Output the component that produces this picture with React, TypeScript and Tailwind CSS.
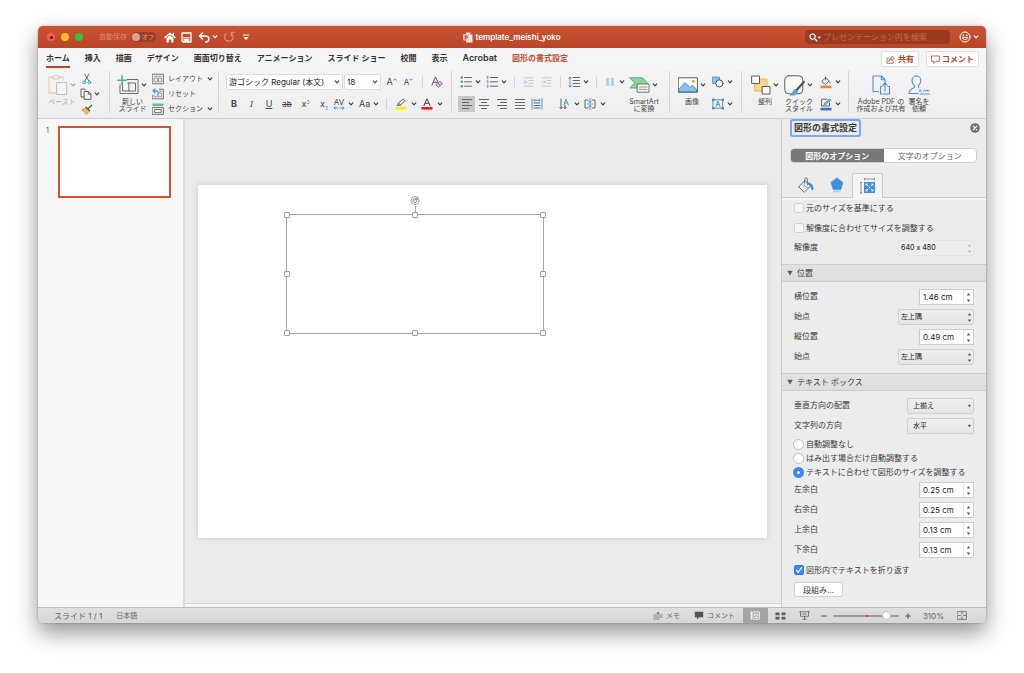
import React from 'react';

type Kids = { children?: React.ReactNode };

function Svg({ w, h, children, className = '' }: { w: number; h: number; className?: string } & Kids) {
  return (
    <svg width={w} height={h} viewBox={`0 0 ${w} ${h}`} fill="none" strokeLinecap="round" strokeLinejoin="round" className={'shrink-0 ' + className} aria-hidden="true">
      {children}
    </svg>
  );
}

function Caret({ className = '' }: { className?: string }) {
  return (
    <span className={'flex w-2 shrink-0 items-center justify-center ' + className}>
      <Svg w={6} h={4}>
        <path d="M1.2 0.9 L3 2.8 L4.8 0.9" stroke="currentColor" strokeWidth="1.2" />
      </Svg>
    </span>
  );
}

function Group({ children, className = '' }: { className?: string } & Kids) {
  return <div className={'flex shrink-0 border-r border-[#d6d6d6] ' + className}>{children}</div>;
}

function Tool({ label, children, className = '' }: { label: string; className?: string } & Kids) {
  return (
    <button type="button" aria-label={label} className={'flex h-4 shrink-0 items-center justify-center ' + className}>
      {children}
    </button>
  );
}

function Sep({ className = '' }: { className?: string }) {
  return <span className={'h-3 w-px shrink-0 bg-[#d6d6d6] ' + className} />;
}

function BigTool({ icon, caret = true, lines, className = '' }: { icon: React.ReactNode; caret?: boolean; lines: string[]; className?: string }) {
  return (
    <button type="button" className={'flex shrink-0 flex-col items-center pt-px ' + className}>
      <span className="flex h-[26px] items-center gap-px">
        {icon}
        {caret && <Caret />}
      </span>
      <span className="flex flex-col items-center text-[7px] leading-[7px] whitespace-nowrap">
        {lines.map((l) => (
          <span key={l}>{l}</span>
        ))}
      </span>
    </button>
  );
}

const BLUE = '#3a93d0';
const GREY = '#666666';

function Lines({ xs, color = GREY }: { xs: [number, number][]; color?: string }) {
  return (
    <Svg w={12} h={12}>
      {xs.map(([a, b], i) => (
        <path key={i} d={`M${a} ${1.5 + i * 3}H${b}`} stroke={color} strokeWidth="1" strokeLinecap="butt" />
      ))}
    </Svg>
  );
}

function TitleBar() {
  return (
    <header className="grid h-[22px] shrink-0 grid-cols-[1fr_auto_1fr] items-center bg-linear-to-b from-[#c85434] to-[#bb4526] text-white">
      <div className="flex items-center pl-[9px]">
        <div className="flex gap-[6px]">
          <button type="button" aria-label="閉じる" className="flex size-2 items-center justify-center rounded-full bg-[#fb5b55]">
            <span className="size-[3px] rounded-full bg-[#5d0b06]" />
          </button>
          <button type="button" aria-label="しまう" className="size-2 rounded-full bg-[#fcbc2e]" />
          <button type="button" aria-label="拡大" className="size-2 rounded-full bg-[#28c840]" />
        </div>
        <label htmlFor="autosave" className="ml-4 text-[7px] text-[#d98b76]">自動保存</label>
        <button id="autosave" type="button" role="switch" aria-checked="false" className="ml-1 flex h-[10px] w-[25px] items-center gap-[2px] rounded-full bg-[#9d3e26] px-px text-[6px] leading-none text-[#e3a898]">
          <span className="size-2 shrink-0 rounded-full bg-[#dfa294]" />
          オフ
        </button>
        <button type="button" aria-label="ホーム" className="ml-2">
          <Svg w={12} h={11}>
            <path d="M1 5.6 L6 1.2 L11 5.6 M9.3 1.4V3.4" stroke="#fff" strokeWidth="1.4" />
            <path d="M2.5 6.3 L6 3.2 L9.5 6.3 V10.5 H7.2 V7.5 H4.8 V10.5 H2.5Z" fill="#fff" />
          </Svg>
        </button>
        <button type="button" aria-label="保存" className="ml-[5px]">
          <Svg w={11} h={11}>
            <path d="M1 1H10V10H2.2L1 8.8Z" stroke="#fff" strokeWidth="1.3" />
            <path d="M2.2 5.6H8.8 M3.3 7H7.8V10H6.2V8.3H4.9V10H3.3Z" fill="#fff" stroke="#fff" strokeWidth=".8" />
          </Svg>
        </button>
        <button type="button" aria-label="元に戻す" className="ml-[6px] flex items-center gap-px">
          <Svg w={12} h={11}>
            <path d="M4.5 1 L1.5 4 L4.5 7 M1.5 4H7.5C12 4 12 10 7.5 10" stroke="#fff" strokeWidth="1.5" />
          </Svg>
          <Caret />
        </button>
        <button type="button" aria-label="やり直し" className="ml-1">
          <Svg w={12} h={12}>
            <path d="M3.2 2.6A4.3 4.3 0 1 0 8.4 2.5 M8.2 5V1.5H11" stroke="#dc8a74" strokeWidth="1.3" />
          </Svg>
        </button>
        <button type="button" aria-label="カスタマイズ" className="ml-2">
          <Svg w={6} h={7}>
            <path d="M0.5 1H5.5" stroke="#fff" strokeWidth="1" />
            <path d="M0.3 3H5.7L3 6Z" fill="#fff" />
          </Svg>
        </button>
      </div>
      <h1 className="flex items-center gap-[2px] text-[8px] font-semibold">
        <Svg w={10} h={11}>
          <path d="M3 .5H7L9.5 3V10.5H3Z" fill="#f6e4df" />
          <path d="M7 .5L9.5 3H7Z" fill="#d8937f" />
          <rect x="0" y="2" width="6" height="6.5" rx="1" fill="#eec9be" />
          <path d="M2.2 7.3V3.8H3.4A1 1 0 0 1 3.4 6H2.4" stroke="#b5452a" strokeWidth=".9" />
        </Svg>
        template_meishi_yoko
      </h1>
      <div className="flex items-center justify-end pr-[6px]">
        <label className="flex h-[14px] w-[145px] items-center gap-[2px] rounded-sm bg-[#9b3a20] px-1">
          <Svg w={12} h={9}>
            <circle cx="3.6" cy="3.6" r="2.6" stroke="#fff" strokeWidth="1.1" />
            <path d="M5.6 5.6L8 8" stroke="#fff" strokeWidth="1.3" />
            <path d="M8.5 3.7H12L10.2 5.7Z" fill="#fff" />
          </Svg>
          <input aria-label="検索" placeholder="プレゼンテーション内を検索" className="w-full min-w-0 bg-transparent text-[8px] outline-none placeholder:text-[#c06a53]" />
        </label>
        <button type="button" aria-label="フィードバック" className="ml-[9px] flex items-center gap-px">
          <Svg w={12} h={12}>
            <circle cx="6" cy="6" r="5" stroke="#fff" strokeWidth="1" />
            <path d="M3.4 6.8C4 9.4 8 9.4 8.6 6.8Z" stroke="#fff" strokeWidth=".9" />
            <circle cx="4.3" cy="4.4" r=".8" fill="#fff" />
            <circle cx="7.7" cy="4.4" r=".8" fill="#fff" />
          </Svg>
          <Caret />
        </button>
      </div>
    </header>
  );
}

const TABS = ['ホーム', '挿入', '描画', 'デザイン', '画面切り替え', 'アニメーション', 'スライド ショー', '校閲', '表示', 'Acrobat', '図形の書式設定'];

function TabRow() {
  return (
    <div className="flex h-[22px] shrink-0 items-center justify-between bg-[#f6f5f5] pr-[7px] pl-2">
      <nav className="flex gap-[15px] text-[8px] font-semibold text-[#333]">
        {TABS.map((t, i) => (
          <button
            key={t}
            type="button"
            className={
              'h-[18px] border-b-2 whitespace-nowrap ' +
              (i === 0 ? 'border-[#b7472a]' : 'border-transparent') +
              (t === 'Acrobat' ? ' text-[9px]' : '') +
              (i === TABS.length - 1 ? ' text-[#bb5136]' : '')
            }
          >
            {t}
          </button>
        ))}
      </nav>
      <div className="flex gap-[7px] text-[8px] font-semibold text-[#b7472a]">
        <button type="button" className="flex h-4 items-center gap-[3px] rounded-xs border border-[#e0dede] bg-white px-1">
          <Svg w={9} h={9}>
            <path d="M3 3H1V8.3H7.3V6.5 M3 6C3.3 3.8 4.6 2.9 6 2.9V1.2L8.4 3.5L6 5.6V4.2C4.7 4.2 3.7 4.8 3 6Z" stroke="#c04f33" strokeWidth=".8" />
          </Svg>
          共有
        </button>
        <button type="button" className="flex h-4 items-center gap-[2px] rounded-xs border border-[#e0dede] bg-white px-1">
          <Svg w={9} h={9}>
            <path d="M.7 1H8.3V6.3H4.8L2.8 8.4V6.3H.7Z" stroke="#c04f33" strokeWidth=".9" />
          </Svg>
          コメント
        </button>
      </div>
    </div>
  );
}

function SlideGlyph({ kind }: { kind: 'layout' | 'reset' | 'section' }) {
  return (
    <Svg w={12} h={12}>
      {kind === 'section' ? (
        <>
          <rect x=".5" y=".5" width="11" height="2.6" fill="#5fc08a" />
          <path d="M.6 4.6H11.4V11.4H.6Z M2.8 6.5H9.2V9.6H2.8Z" stroke="#666" strokeWidth=".9" />
        </>
      ) : (
        <>
          <path d="M.6 1.2H11.4V10.8H.6Z" stroke="#666" strokeWidth=".9" />
          <path d="M2.4 3.2H9.6 M2.4 5H5.4V8.8H2.4Z M6.8 5H9.6V8.8H6.8Z" stroke="#777" strokeWidth=".7" />
        </>
      )}
      {kind === 'reset' && (
        <>
          <rect x="0" y="0" width="7" height="6.6" fill="#f2f1f1" />
          <path d="M3 .9L1 2.9L3 4.9 M1 2.9H4.5C6.5 3 6.5 5 6 6" stroke={BLUE} strokeWidth="1.2" />
        </>
      )}
    </Svg>
  );
}

function Ribbon() {
  return (
    <div className="flex h-[49px] shrink-0 border-b border-[#cfcfcf] bg-linear-to-b from-[#f5f4f4] to-[#efeeee] pt-px pb-[5px] pl-2 text-[#444]">
      <Group className="w-[64px]">
        <BigTool
          className="w-[32px] text-[#a9a9a9]"
          lines={['ペースト']}
          icon={
            <Svg w={20} h={22}>
              <path d="M5 3H1V19H8 M11 3H15V6" stroke="#f0d3a6" strokeWidth="1.3" />
              <path d="M4.5 4.5V2.5H6.3C6.5 .5 9.5 .5 9.7 2.5H11.5V4.5Z" stroke="#c4c4c4" strokeWidth=".9" fill="#f6f6f6" />
              <path d="M9 8.5H18.7V20.5H9Z" stroke="#bdbdbd" strokeWidth="1" fill="#f6f6f6" />
            </Svg>
          }
        />
        <div className="ml-[2px] flex flex-col items-start gap-px pt-px">
          <Tool label="切り取り" className="h-[14px] w-[13px]">
            <Svg w={10} h={12}>
              <path d="M2.5 1L7 8 M7 1L2.8 8" stroke="#555" strokeWidth=".9" />
              <circle cx="2.2" cy="9.4" r="1.4" stroke={BLUE} />
              <circle cx="7.4" cy="9.4" r="1.4" stroke={BLUE} />
            </Svg>
          </Tool>
          <Tool label="コピー" className="h-[14px] gap-px">
            <Svg w={12} h={12}>
              <path d="M4 9H1V1H4.5L6 2.5" stroke="#555" strokeWidth=".9" />
              <path d="M4.5 3.5H8.5L11 6V11.3H4.5Z M8.3 3.7V6.2H11" stroke="#555" strokeWidth=".9" />
            </Svg>
            <Caret />
          </Tool>
          <Tool label="書式のコピー" className="h-[14px] w-[13px]">
            <Svg w={12} h={11}>
              <path d="M1 5.5L5 4L8 7L6 10.3Z" fill="#f4b36a" stroke="#e69339" strokeWidth=".8" />
              <path d="M5 3.2L8.6 6.8 M6.8 4.9L10.6 1.2" stroke="#555" strokeWidth="1.3" />
            </Svg>
          </Tool>
        </div>
      </Group>

      <Group className="w-[109px] pl-[7px]">
        <BigTool
          className="w-[31px]"
          lines={['新しい', 'スライド']}
          icon={
            <Svg w={22} h={20}>
              <path d="M10 4.5H21V18.5H3V10 M5.5 8V16H18.5V8H11 M11.8 8V16" stroke="#6e6e6e" strokeWidth="1" />
              <path d="M5 .8V9.6 M.8 5.2H9.5" stroke="#4db87b" strokeWidth="1.5" />
            </Svg>
          }
        />
        <div className="ml-1 flex flex-col items-start gap-px pt-px text-[7px]">
          <Tool label="レイアウト" className="h-[14px] gap-1">
            <SlideGlyph kind="layout" />
            レイアウト
            <Caret className="-ml-px" />
          </Tool>
          <Tool label="リセット" className="h-[14px] gap-1">
            <SlideGlyph kind="reset" />
            リセット
          </Tool>
          <Tool label="セクション" className="h-[14px] gap-1">
            <SlideGlyph kind="section" />
            セクション
            <Caret className="-ml-px" />
          </Tool>
        </div>
      </Group>

      <Group className="w-[233px] flex-col gap-[6px] pt-[3px] pl-[7px]">
        <div className="flex items-center">
          <label className="relative flex items-center">
            <select aria-label="フォント" className="h-4 w-[117px] appearance-none rounded-xs border border-[#dcdcdc] bg-white pl-[2px] text-[8px] text-[#222]">
              <option>游ゴシック Regular (本文)</option>
            </select>
            <Caret className="pointer-events-none absolute right-[2px]" />
          </label>
          <label className="relative ml-px flex items-center">
            <select aria-label="フォント サイズ" className="h-4 w-[37px] appearance-none rounded-xs border border-[#dcdcdc] bg-white pl-[2px] text-[8px] text-[#222]">
              <option>18</option>
            </select>
            <Caret className="pointer-events-none absolute right-[2px]" />
          </label>
          <Tool label="拡大" className="ml-[2px] w-[17px] text-[9px]">
            A
            <Svg w={4} h={8}><path d="M.6 2.3L2 .9L3.4 2.3" stroke={BLUE} strokeWidth="1" /></Svg>
          </Tool>
          <Tool label="縮小" className="w-[17px] text-[8px]">
            A
            <Svg w={4} h={8}><path d="M.6 .9L2 2.3L3.4 .9" stroke={BLUE} strokeWidth="1" /></Svg>
          </Tool>
          <Sep className="ml-[5px]" />
          <Tool label="書式のクリア" className="ml-2">
            <Svg w={12} h={12}>
              <path d="M1 9L4.5 1L7 6.3 M2.3 6.3H6" stroke="#555" strokeWidth="1" />
              <path d="M5 8.6L8.8 5.4L11.3 7.6L7.6 10.9Z M6.7 7.2L9.3 9.4" stroke="#a64fb5" strokeWidth="1" fill="#e7c9ec" />
            </Svg>
          </Tool>
        </div>
        <div className="-ml-px flex items-center text-[9px]">
          <Tool label="太字" className="w-[18px] font-bold">B</Tool>
          <Tool label="斜体" className="w-[17px] font-serif italic">I</Tool>
          <Tool label="下線" className="w-[18px] underline">U</Tool>
          <Tool label="取り消し線" className="w-[18px] text-[8px] line-through">ab</Tool>
          <Tool label="上付き" className="w-[19px]">x<span className="mb-[5px] text-[5px] text-[#3a93d0]">2</span></Tool>
          <Tool label="下付き" className="w-[18px]">x<span className="mt-[7px] text-[5px] text-[#3a93d0]">2</span></Tool>
          <Tool label="文字の間隔" className="gap-[2px] text-[8px] leading-none">
            <span className="flex flex-col items-center">
              AV
              <Svg w={12} h={4}>
                <path d="M2.3 .7L1 2L2.3 3.3 M1 2H5 M9.7 .7L11 2L9.7 3.3 M11 2H7" stroke={BLUE} strokeWidth=".9" />
              </Svg>
            </span>
            <Caret />
          </Tool>
          <Tool label="文字種の変換" className="ml-1 gap-[2px]">Aa<Caret /></Tool>
          <Sep className="ml-[6px]" />
          <Tool label="蛍光ペン" className="ml-2 gap-[3px]">
            <Svg w={12} h={12}>
              <path d="M2.5 7.5L3.5 5L8.3 1L10 2.8L5.5 7L2.5 7.5Z M3.6 5.2L5.4 7" stroke="#555" strokeWidth=".9" />
              <rect x=".5" y="9" width="11" height="2.6" fill="#ffee00" />
            </Svg>
            <Caret />
          </Tool>
          <Tool label="フォントの色" className="ml-[3px] gap-[3px]">
            <Svg w={12} h={12}>
              <path d="M3 7.6L6 .8L9 7.6 M4 5.3H8" stroke="#444" strokeWidth="1" />
              <rect x=".5" y="9" width="11" height="2.6" fill="#f51414" />
            </Svg>
            <Caret />
          </Tool>
        </div>
      </Group>

      <Group className="w-[218px] pl-[6px]">
        <div className="flex w-[168px] flex-col gap-[6px] pt-[3px]">
          <div className="flex items-center">
            <Tool label="箇条書き" className="ml-[2px] gap-[2px]">
              <Svg w={12} h={12}>
                {[1.5, 5.8, 10.2].map((y) => (
                  <g key={y}>
                    <circle cx="1.8" cy={y} r="1.2" fill={BLUE} />
                    <path d={`M4.5 ${y}H11.5`} stroke="#666" strokeWidth="1" />
                  </g>
                ))}
              </Svg>
              <Caret />
            </Tool>
            <Tool label="段落番号" className="ml-1 gap-[2px]">
              <Svg w={12} h={12}>
                {[1.5, 5.8, 10.2].map((y) => (
                  <g key={y}>
                    <path d={`M1 ${y - 1}H2V${y + 1}H1.3`} stroke={BLUE} strokeWidth=".9" />
                    <path d={`M4.5 ${y}H11.5`} stroke="#666" strokeWidth="1" />
                  </g>
                ))}
              </Svg>
              <Caret />
            </Tool>
            <Sep className="ml-[6px]" />
            <Tool label="インデントを減らす" className="ml-2">
              <Svg w={11} h={10}>
                <path d="M1 .8H10 M6 3.6H10 M6 6.4H10 M1 9.2H10" stroke="#c3c3c3" strokeWidth=".9" />
                <path d="M2.5 3.5L1 5L2.5 6.5 M1 5H4.5" stroke="#a3cde8" strokeWidth=".9" />
              </Svg>
            </Tool>
            <Tool label="インデントを増やす" className="ml-[7px]">
              <Svg w={11} h={10}>
                <path d="M1 .8H10 M6 3.6H10 M6 6.4H10 M1 9.2H10" stroke="#c3c3c3" strokeWidth=".9" />
                <path d="M3 3.5L4.5 5L3 6.5 M4.5 5H1" stroke="#a3cde8" strokeWidth=".9" />
              </Svg>
            </Tool>
            <Sep className="ml-2" />
            <Tool label="行間" className="ml-[7px] gap-[2px]">
              <Svg w={12} h={12}>
                <path d="M5 1.5H11.5 M5 4.5H11.5 M5 7.5H11.5 M5 10.5H11.5" stroke="#555" strokeWidth=".9" />
                <path d="M2 1V11 M.7 2.4L2 1L3.3 2.4 M.7 9.6L2 11L3.3 9.6" stroke={BLUE} strokeWidth=".9" />
              </Svg>
              <Caret />
            </Tool>
            <Sep className="ml-[6px]" />
            <Tool label="段組み" className="ml-2 gap-[3px]">
              <Svg w={10} h={8}>
                <path d="M1 1H4.2 M5.8 1H9 M1 3H4.2 M5.8 3H9 M1 5H4.2 M5.8 5H9 M1 7H4.2 M5.8 7H9" stroke="#79b5dd" strokeWidth="1" strokeLinecap="butt" />
              </Svg>
              <Caret />
            </Tool>
          </div>
          <div className="flex items-center">
            <Tool label="左揃え" className="w-[17px] bg-[#c9c8c8]"><Lines xs={[[1, 11], [1, 8], [1, 11], [1, 8]]} /></Tool>
            <Tool label="中央揃え" className="w-[18px]"><Lines xs={[[1, 11], [3, 9], [1, 11], [3, 9]]} /></Tool>
            <Tool label="右揃え" className="w-[18px]"><Lines xs={[[1, 11], [4, 11], [1, 11], [4, 11]]} /></Tool>
            <Tool label="両端揃え" className="w-[17px]"><Lines xs={[[1, 11], [1, 11], [1, 11], [1, 11]]} /></Tool>
            <Tool label="均等割り付け" className="w-[18px]">
              <Svg w={12} h={12}>
                <path d="M1 .8V11.2 M11 .8V11.2 M3 2.3H9 M4 1.2L2.8 2.3L4 3.4 M8 1.2L9.2 2.3L8 3.4" stroke={BLUE} strokeWidth=".9" />
                <path d="M3 5H9 M3 7.5H9 M3 10H9" stroke={GREY} strokeWidth="1" />
              </Svg>
            </Tool>
            <Tool label="文字列の方向" className="ml-[13px] gap-[3px]">
              <Svg w={11} h={12}>
                <path d="M2 1V10.5 M.8 9.3L2 10.7L3.2 9.3 M6 7.5V10.5 M4.8 9.3L6 10.7L7.2 9.3" stroke="#555" strokeWidth=".9" />
                <path d="M4.8 7L7 1.2L9.4 7 M5.7 5H8.4" stroke={BLUE} strokeWidth=".9" />
              </Svg>
              <Caret />
            </Tool>
            <Tool label="文字の配置" className="ml-[3px] gap-[3px]">
              <Svg w={12} h={12}>
                <path d="M4 2H1V10H4 M8 2H11V10H8" stroke="#555" strokeWidth=".9" />
                <path d="M6 .8V4.6 M6 7.4V11.2 M4.8 3.4L6 4.6L7.2 3.4 M4.8 8.6L6 7.4L7.2 8.6 M3.5 6H8.5" stroke={BLUE} strokeWidth=".9" />
              </Svg>
              <Caret />
            </Tool>
          </div>
        </div>
        <BigTool
          className="w-[36px]"
          lines={['SmartArt', 'に変換']}
          icon={
            <Svg w={21} h={16}>
              <path d="M1 .8H13.5L18.5 6V11H1L5.5 6Z" fill="#8dd3a0" stroke="#55b574" strokeWidth="1" />
              <path d="M8.5 7H20V15.2H8.5Z" fill="#f7f7f7" stroke="#666" strokeWidth=".9" />
              <path d="M10.5 10H18 M10.5 12.4H18" stroke="#888" strokeWidth=".9" />
            </Svg>
          }
        />
      </Group>

      <Group className="w-[72px] pl-2">
        <BigTool
          className="w-[28px]"
          lines={['画像']}
          icon={
            <Svg w={20} h={16}>
              <path d="M.6 .8H19.4V15.2H.6Z" fill="#fff" />
              <path d="M1 12L7 5.5L12 10.5L14.5 8L19 13V15H1Z" fill="#8cc1e8" stroke={BLUE} strokeWidth=".9" />
              <circle cx="15.3" cy="4.4" r="1.4" fill="#f0954a" />
              <path d="M.6 .8H19.4V15.2H.6Z" stroke="#5a5a5a" strokeWidth="1" />
            </Svg>
          }
        />
        <div className="ml-[6px] flex flex-col gap-[6px] pt-[3px]">
          <Tool label="図形" className="gap-[2px]">
            <Svg w={12} h={12}>
              <path d="M.8 1H7.5V7.5H.8Z" fill="#8cc1e8" stroke={BLUE} strokeWidth=".8" />
              <circle cx="7.4" cy="7.4" r="3.6" fill="#f5f5f5" stroke="#555" strokeWidth="1" />
            </Svg>
            <Caret />
          </Tool>
          <Tool label="テキスト ボックス" className="gap-[2px]">
            <Svg w={12} h={12}>
              <path d="M1.3 1.8H10.7V10.2H1.3Z" stroke="#666" strokeWidth=".8" />
              <path d="M4 8.4L6 3.2L8 8.4 M4.7 6.6H7.3" stroke={BLUE} strokeWidth=".9" />
              {[[0, 0.6], [9.6, 0.6], [0, 9], [9.6, 9]].map(([x, y]) => (
                <rect key={`${x}-${y}`} x={x} y={y} width="2.4" height="2.4" fill={BLUE} />
              ))}
            </Svg>
            <Caret />
          </Tool>
        </div>
      </Group>

      <Group className="w-[107px] pl-2">
        <BigTool
          className="w-[30px]"
          lines={['整列']}
          icon={
            <Svg w={20} h={20}>
              <path d="M4 4H16V16H4Z" fill="#f8d58c" stroke="#e9b95c" strokeWidth="1" />
              <path d="M1 1H8.5V8.5H1Z M11.5 11.5H19V19H11.5Z" fill="#f9f9f9" stroke="#5a5a5a" strokeWidth="1" />
            </Svg>
          }
        />
        <BigTool
          className="ml-1 w-[30px]"
          lines={['クイック', 'スタイル']}
          icon={
            <Svg w={21} h={21}>
              <rect x=".8" y=".8" width="18" height="18" rx="4" fill="#f9f9f9" stroke="#5a5a5a" strokeWidth="1" />
              <path d="M19.8 7L12.5 15.2" stroke="#555" strokeWidth="2.2" />
              <path d="M6.5 20C9 19.5 8.5 15.5 11.2 14.2L13.6 16.6C13 19.5 9.5 20.8 6.5 20Z" fill="#5aa7df" stroke={BLUE} strokeWidth=".7" />
            </Svg>
          }
        />
        <div className="ml-[6px] flex flex-col gap-[6px] pt-[3px]">
          <Tool label="図形の塗りつぶし" className="gap-[2px]">
            <Svg w={12} h={13}>
              <path d="M2 5.2L5.7 1.6L9.2 5L5.6 8.2Z M5.7 .8V4" stroke="#555" strokeWidth=".9" />
              <path d="M9.8 5C11 6.6 10.8 7.8 10 7.8S9 6.6 9.8 5Z" fill={BLUE} />
              <rect x=".5" y="9.6" width="11" height="2.6" fill="#ee7d31" />
            </Svg>
            <Caret />
          </Tool>
          <Tool label="図形の枠線" className="gap-[2px]">
            <Svg w={12} h={13}>
              <path d="M7 1.2H1.5V8H9.5V5" stroke="#555" strokeWidth=".9" />
              <path d="M4 6.8L5 4.6L9.6 .8L11 2.3L6.2 6.3Z" fill="#8cc1e8" stroke={BLUE} strokeWidth=".8" />
              <rect x=".5" y="9.8" width="11" height="2.6" fill="#3f6cc5" />
            </Svg>
            <Caret />
          </Tool>
        </div>
      </Group>

      <div className="flex shrink-0 pl-2">
        <BigTool
          caret={false}
          className="w-[48px]"
          lines={['Adobe PDF の', '作成および共有']}
          icon={
            <Svg w={19} h={20}>
              <path d="M6.5 16.5H1V1H9.5L13 4.5V8 M9.3 1.2V4.7H13" stroke="#4a90ea" strokeWidth="1.1" />
              <path d="M10 11.5H8.5V19H17.5V11.5H16 M13 16V8.3 M10.8 10.3L13 8L15.2 10.3" stroke="#4a90ea" strokeWidth="1.1" />
            </Svg>
          }
        />
        <BigTool
          caret={false}
          className="ml-[2px] w-[24px]"
          lines={['署名を', '依頼']}
          icon={
            <Svg w={22} h={20}>
              <path d="M10 18.5H1C1 15 3 14 6 12.8C7 12.3 6.6 11.3 6 10.4C4.6 8.6 4 7.2 4 5.4A4.4 4.4 0 0 1 12.8 5.4C12.8 7.2 12.2 8.6 10.8 10.4C10.2 11.3 10 12 10.8 12.6" stroke="#4a90ea" strokeWidth="1.1" />
              <path d="M11 14.5L13.5 16.8 M13.5 14.5L11 16.8 M15 16.5L16.8 14.8L17.5 16.4L19.2 14.8L19.8 16.2L21.3 15.2 M12 19H21.3" stroke="#4a90ea" strokeWidth=".9" />
            </Svg>
          }
        />
      </div>
    </div>
  );
}

const HANDLES = [
  'left-0 top-0', 'left-1/2 top-0', 'left-full top-0',
  'left-0 top-1/2', 'left-full top-1/2',
  'left-0 top-full', 'left-1/2 top-full', 'left-full top-full',
];

function Canvas() {
  return (
    <main className="flex min-w-0 flex-1 flex-col bg-[#ebebeb]">
      <div className="flex flex-1 items-start border-b border-[#d2d2d2] pt-[66px] pr-[14px] pl-[13px]">
        <div className="relative aspect-[569/353] w-full bg-white shadow-[0_0_6px_rgba(0,0,0,0.14)]">
          <div className="absolute top-[8.2%] left-[15.5%] h-[34%] w-[45.3%] border border-[#a8a8a8]">
            <span className="absolute -top-[9px] left-1/2 h-[9px] w-px bg-[#b0b0b0]" />
            <span className="absolute -top-[19px] left-1/2 flex size-[9px] -translate-x-1/2 items-center justify-center rounded-full border border-[#a0a0a0] bg-white">
              <Svg w={7} h={7}>
                <path d="M5.3 4.3A2 2 0 1 1 4.6 1.9 M5.6 .8V2.8H3.6" stroke="#666" strokeWidth=".9" />
              </Svg>
            </span>
            {HANDLES.map((pos) => (
              <span key={pos} className={'absolute size-[6px] -translate-1/2 rounded-[1px] border border-[#a0a0a0] bg-white ' + pos} />
            ))}
          </div>
        </div>
      </div>
      <div className="h-[3px] shrink-0 bg-[#f7f7f7]" />
    </main>
  );
}

function Steps({ faint = false }: { faint?: boolean }) {
  return (
    <Svg w={5} h={11} className={faint ? 'text-[#b5b5b5]' : 'text-[#555]'}>
      <path d="M.8 3.4L2.5 1L4.2 3.4Z M.8 7.6L2.5 10L4.2 7.6Z" fill="currentColor" />
    </Svg>
  );
}

function Row({ id, label, children }: { id: string; label: string } & Kids) {
  return (
    <div className="flex h-4 items-center justify-between">
      <label htmlFor={id} className="pb-[2px]">{label}</label>
      {children}
    </div>
  );
}

function NumberRow({ id, label, value }: { id: string; label: string; value: string }) {
  return (
    <Row id={id} label={label}>
      <span className="flex h-4 w-[55px] items-center border border-[#cdcdcd] bg-white">
        <input id={id} defaultValue={value} className="w-full min-w-0 flex-1 bg-transparent pl-[3px] text-[8px] text-[#222] outline-none" />
        <button type="button" aria-label={label + 'を変更'} className="flex h-full w-[10px] items-center justify-center border-l border-[#e6e6e6]">
          <Steps />
        </button>
      </span>
    </Row>
  );
}

function SelectRow({ id, label, value, small = false }: { id: string; label: string; value: string; small?: boolean }) {
  return (
    <Row id={id} label={label}>
      <span className={'relative flex items-center ' + (small ? 'w-[67px]' : 'w-[76px]')}>
        <select id={id} className={'h-4 w-full appearance-none rounded-xs border border-[#d0d0d0] bg-linear-to-b from-[#efefef] to-[#e6e6e6] text-[7px] text-[#222] ' + (small ? 'pl-[5px]' : 'pl-[2px]')}>
          <option>{value}</option>
        </select>
        <span className="pointer-events-none absolute right-[2px] flex">
          {small ? (
            <Svg w={5} h={4}><path d="M.8 .8H4.2L2.5 3.2Z" fill="#555" /></Svg>
          ) : (
            <Steps />
          )}
        </span>
      </span>
    </Row>
  );
}

function Check({ id, label, checked = false }: { id: string; label: string; checked?: boolean }) {
  return (
    <div className="flex h-4 items-center gap-[2px]">
      <span className="relative flex size-[10px] items-center justify-center">
        <input id={id} type="checkbox" defaultChecked={checked} className="peer size-[10px] appearance-none rounded-xs border border-[#d2d2d2] bg-[#f6f6f6] checked:border-[#2f7cf0] checked:bg-[#3b86f7]" />
        <Svg w={8} h={8} className="pointer-events-none absolute hidden peer-checked:block">
          <path d="M1.5 4.2L3.3 6.2L6.5 1.6" stroke="#fff" strokeWidth="1.3" />
        </Svg>
      </span>
      <label htmlFor={id}>{label}</label>
    </div>
  );
}

function Radio({ id, label, checked = false }: { id: string; label: string; checked?: boolean }) {
  return (
    <div className="-ml-px flex h-[14px] items-center gap-[2px]">
      <input id={id} name="autofit" type="radio" defaultChecked={checked} className="size-[11px] appearance-none rounded-full border border-[#bfbfbf] bg-white checked:border-4 checked:border-[#3b86f7]" />
      <label htmlFor={id}>{label}</label>
    </div>
  );
}

function SectionHead({ children }: Kids) {
  return (
    <h3 className="h-[18px] shrink-0 border-y border-[#cccccc] bg-linear-to-b from-[#e2e2e2] to-[#dedede]">
      <button type="button" aria-expanded="true" className="flex h-full w-full items-center gap-1 pl-[5px] text-[8px]">
        <Svg w={6} h={6}><path d="M.3 .8H5.7L3 5.6Z" fill="#5a5a5a" /></Svg>
        {children}
      </button>
    </h3>
  );
}

function FormatPanel() {
  return (
    <aside className="flex w-[205px] shrink-0 flex-col border-l border-[#cbcbcb] bg-[#ececec] text-[8px] text-[#3a3a3a]">
      <div className="flex shrink-0 items-center justify-between pt-[2px] pr-[6px] pl-[10px]">
        <h2 className="flex h-[14px] items-center rounded-[1px] px-[2px] text-[9px] font-semibold ring-2 ring-[#7ba9ee]">図形の書式設定</h2>
        <button type="button" aria-label="閉じる">
          <Svg w={10} h={10}>
            <circle cx="5" cy="5" r="4.8" fill="#6e6e6e" />
            <path d="M3.2 3.2L6.8 6.8 M6.8 3.2L3.2 6.8" stroke="#fff" strokeWidth="1.1" />
          </Svg>
        </button>
      </div>
      <div className="mt-[13px] mr-[9px] ml-2 grid h-[15px] shrink-0 grid-cols-2 overflow-hidden rounded-sm border border-[#d0d0d0] bg-white">
        <button type="button" className="bg-[#787878] font-semibold text-white">図形のオプション</button>
        <button type="button" className="text-[#666]">文字のオプション</button>
      </div>
      <div className="mt-[10px] flex h-[25px] shrink-0 items-end border-b border-[#cccccc] pl-2">
        <button type="button" aria-label="塗りつぶしと線" className="flex h-6 w-[31px] items-center justify-center">
          <Svg w={16} h={17}>
            <path d="M1 9.5L7 3.5L12.5 9L6.5 15Z" stroke="#666" strokeWidth="1" fill="#f7f7f7" />
            <path d="M6.8 7V2.2A1.3 1.3 0 0 1 9.4 2.2V8" stroke="#666" strokeWidth=".9" />
            <path d="M9.3 5.8C13 5.5 15.5 8 15 13C13.5 13 13 11 12.5 9Z M5 8L10.5 11" fill="#3c8ee0" stroke="#3c8ee0" strokeWidth=".8" />
          </Svg>
        </button>
        <button type="button" aria-label="効果" className="flex h-6 w-[31px] items-center justify-center">
          <Svg w={14} h={17}>
            <path d="M7 1L13 5.6L10.9 12.5H3.1L1 5.6Z" fill="#3c8ee0" stroke="#3c8ee0" strokeWidth=".6" />
            <path d="M3 13.5H11L10.6 15.5H3.4Z" fill="#a9cdf0" />
          </Svg>
        </button>
        <button type="button" aria-label="サイズとプロパティ" className="-mb-px flex h-[25px] w-[31px] items-center justify-center border border-b-0 border-[#cccccc] bg-[#f4f4f4]">
          <Svg w={16} h={16}>
            <path d="M1 4.5V15 M.2 4.5H1.8 M.2 15H1.8 M4.5 1H14.5 M4.5 .2V1.8 M14.5 .2V1.8" stroke="#777" strokeWidth=".8" />
            <rect x="4" y="4" width="11" height="11" fill="#3c8ee0" />
            <path d="M6 7.3V6H7.3 M11.7 6H13V7.3 M6 11.7V13H7.3 M13 11.7V13H11.7 M6.2 6.2L8 8 M12.8 6.2L11 8 M6.2 12.8L8 11 M12.8 12.8L11 11" stroke="#fff" strokeWidth=".9" />
            <rect x="8.8" y="8.8" width="1.4" height="1.4" fill="#fff" />
          </Svg>
        </button>
      </div>
      <div className="h-[2px] shrink-0 bg-[#f4f4f4]" />
      <div className="flex flex-col gap-1 pr-3 pb-2 pl-3">
        <Check id="orig" label="元のサイズを基準にする" />
        <Check id="res" label="解像度に合わせてサイズを調整する" />
        <Row id="resval" label="解像度">
          <span className="relative flex w-[76px] items-center">
            <select id="resval" className="h-4 w-full appearance-none rounded-xs border border-[#e4e4e4] bg-[#eeeeee] pl-[2px] text-[7px] font-medium text-[#333] [font-feature-settings:'calt'_0]">
              <option>640 x 480</option>
            </select>
            <span className="pointer-events-none absolute right-[2px] flex"><Steps faint /></span>
          </span>
        </Row>
      </div>
      <SectionHead>位置</SectionHead>
      <div className="flex flex-col gap-1 pt-[7px] pr-3 pb-2 pl-3">
        <NumberRow id="hpos" label="横位置" value="1.46 cm" />
        <SelectRow id="hfrom" label="始点" value="左上隅" />
        <NumberRow id="vpos" label="縦位置" value="0.49 cm" />
        <SelectRow id="vfrom" label="始点" value="左上隅" />
      </div>
      <SectionHead>テキスト ボックス</SectionHead>
      <div className="flex flex-col gap-1 pt-[7px] pr-3 pl-3">
        <SelectRow id="valign" label="垂直方向の配置" value="上揃え" small />
        <SelectRow id="tdir" label="文字列の方向" value="水平" small />
        <div role="radiogroup" aria-label="自動調整" className="-my-px">
          <Radio id="fit0" label="自動調整なし" />
          <Radio id="fit1" label="はみ出す場合だけ自動調整する" />
          <Radio id="fit2" label="テキストに合わせて図形のサイズを調整する" checked />
        </div>
        <NumberRow id="ml" label="左余白" value="0.25 cm" />
        <NumberRow id="mr" label="右余白" value="0.25 cm" />
        <NumberRow id="mt" label="上余白" value="0.13 cm" />
        <NumberRow id="mb" label="下余白" value="0.13 cm" />
        <Check id="wrap" label="図形内でテキストを折り返す" checked />
        <button type="button" className="h-[15px] w-[49px] rounded-xs border border-[#cfcfcf] bg-white leading-none">段組み...</button>
      </div>
    </aside>
  );
}

function StatusBar() {
  return (
    <footer className="flex h-4 shrink-0 items-center justify-between border-t border-[#bcbcbc] bg-linear-to-b from-[#e0e0e0] to-[#d6d6d6] text-[7px] text-[#666]">
      <div className="flex gap-[14px] pl-4">
        <span className="text-[8px]">スライド 1 / 1</span>
        <button type="button">日本語</button>
      </div>
      <div className="flex h-full items-center pr-[19px]">
        <button type="button" className="flex items-center gap-[3px]">
          <Svg w={10} h={9}>
            <path d="M3.2 2.8L5 .8L6.8 2.8Z" fill="#666" />
            <path d="M.8 4H9.2 M.8 6H9.2 M.8 8H6" stroke="#777" strokeWidth=".8" />
          </Svg>
          メモ
        </button>
        <button type="button" className="ml-[14px] flex items-center gap-[3px]">
          <Svg w={10} h={9}><path d="M.8 .8H9.2V6.2H5L3 8.4V6.2H.8Z" fill="#555" /></Svg>
          コメント
        </button>
        <button type="button" aria-label="標準" className="ml-2 flex h-full w-[25px] items-center justify-center bg-[#a3a3a3]">
          <Svg w={10} h={9}>
            <path d="M.6 .6H2V8.4H.6Z" fill="#f3f3f3" />
            <path d="M3.3 .8H9.4V8.2H3.3Z M5 3H7.8V5H5Z M5 6.5H7.8" stroke="#f3f3f3" strokeWidth=".9" />
          </Svg>
        </button>
        <button type="button" aria-label="スライド一覧" className="ml-[7px]">
          <Svg w={11} h={8}><path d="M.5 .5H4.5V3.2H.5Z M6.5 .5H10.5V3.2H6.5Z M.5 4.8H4.5V7.5H.5Z M6.5 4.8H10.5V7.5H6.5Z" fill="#5c5c5c" /></Svg>
        </button>
        <button type="button" aria-label="スライド ショー" className="ml-[13px]">
          <Svg w={11} h={9}><path d="M.6 .8H10.4 M1.5 .8V5.3H9.5V.8 M3.5 3H7.5 M5.5 5.3V8 M3.7 8.3H7.3" stroke="#6a6a6a" strokeWidth=".9" /></Svg>
        </button>
        <button type="button" aria-label="縮小" className="ml-[11px]">
          <Svg w={6} h={6}><path d="M.8 3H5.2" stroke="#555" strokeWidth="1.2" /></Svg>
        </button>
        <span className="relative ml-[6px] flex items-center">
          <input
            type="range"
            aria-label="ズーム"
            defaultValue={86}
            className="h-[2px] w-[66px] appearance-none rounded-full bg-[#9a9a9a] [&::-webkit-slider-thumb]:size-[9px] [&::-webkit-slider-thumb]:appearance-none [&::-webkit-slider-thumb]:rounded-full [&::-webkit-slider-thumb]:border [&::-webkit-slider-thumb]:border-[#c4c4c4] [&::-webkit-slider-thumb]:bg-white"
          />
          <span className="pointer-events-none absolute left-1/2 size-[2px] bg-[#d9482b]" />
        </span>
        <button type="button" aria-label="拡大" className="ml-[6px]">
          <Svg w={6} h={6}><path d="M.8 3H5.2 M3 .8V5.2" stroke="#555" strokeWidth="1.2" /></Svg>
        </button>
        <button type="button" className="ml-3 text-[8px]">310%</button>
        <button type="button" aria-label="ウィンドウに合わせる" className="ml-[13px]">
          <Svg w={10} h={9}>
            <path d="M.6 .6H9.4V8.4H.6Z" stroke="#777" strokeWidth=".9" />
            <path d="M5 1V3 M5 6V8 M1.5 4.5H3.5 M6.5 4.5H8.5" stroke="#777" strokeWidth="1.1" />
          </Svg>
        </button>
      </div>
    </footer>
  );
}

export default function App() {
  return (
    <div className="flex min-h-screen flex-col bg-white px-[38px] pt-[26px] pb-[50px] font-['Inter','Noto_Sans_CJK_JP',sans-serif] leading-[12px]">
      <div className="flex flex-1 flex-col overflow-hidden rounded-[5px] shadow-[0_10px_22px_rgba(0,0,0,0.42),0_0_2px_rgba(0,0,0,0.35)]">
        <TitleBar />
        <TabRow />
        <Ribbon />
        <div className="flex flex-1">
          <aside className="flex w-[147px] shrink-0 items-start gap-2 border-r-2 border-[#dedede] bg-[#f7f7f7] pt-[7px] pl-2">
            <span className="w-1 text-[7px] leading-[10px] text-[#555]">1</span>
            <button type="button" aria-label="スライド 1" className="aspect-[113/72] w-[113px] border-2 border-[#d6532f] bg-white" />
          </aside>
          <Canvas />
          <FormatPanel />
        </div>
        <StatusBar />
      </div>
    </div>
  );
}
